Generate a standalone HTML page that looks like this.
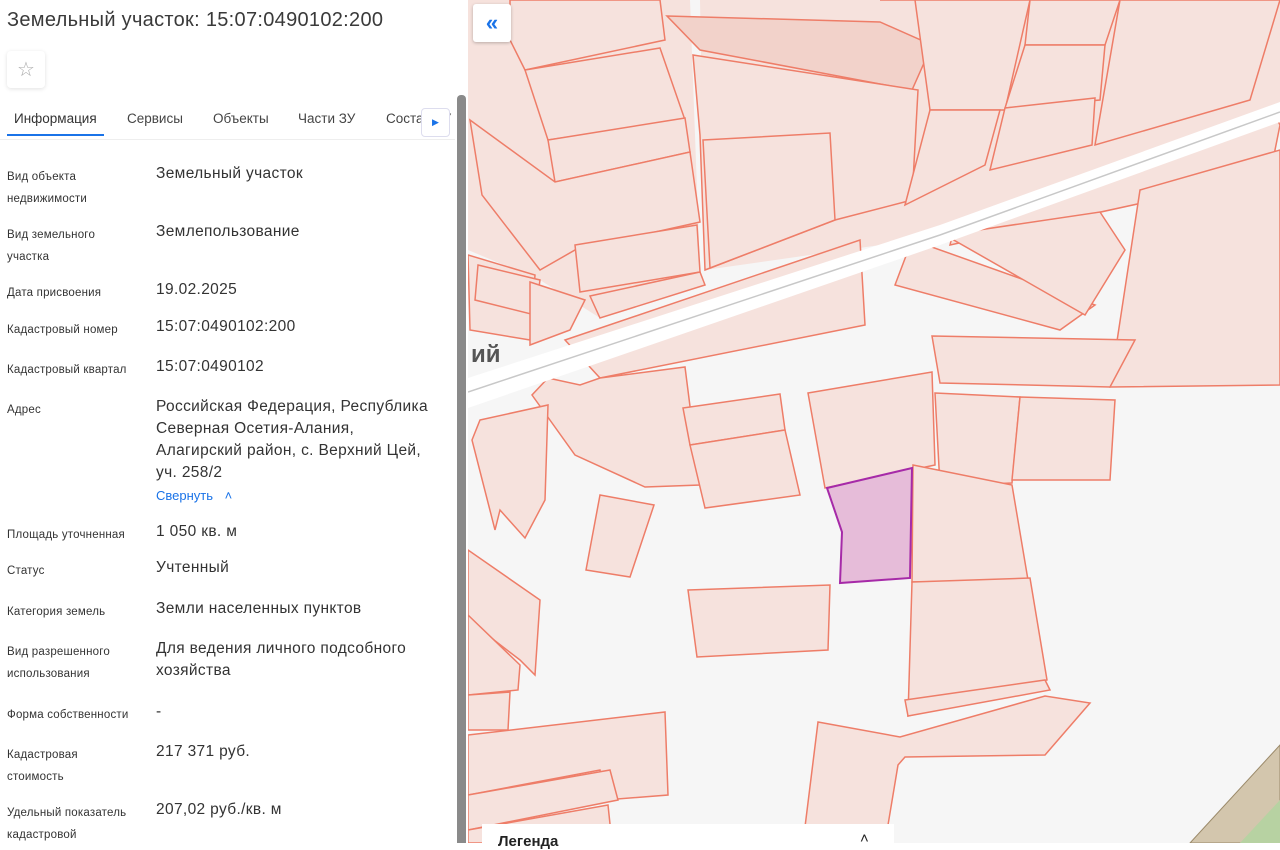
<!DOCTYPE html>
<html><head><meta charset="utf-8"><style>
*{margin:0;padding:0;box-sizing:border-box}
body{width:1280px;height:843px;overflow:hidden;background:#fff;font-family:"Liberation Sans",sans-serif;position:relative;color:#333}
.left{position:absolute;left:0;top:0;width:468px;height:843px;background:#fff}
h1{position:absolute;left:7px;top:9px;font-size:20px;letter-spacing:0.3px;font-weight:normal;color:#3a3a3a}
.star{position:absolute;left:7px;top:51px;width:38px;height:37px;border-radius:4px;box-shadow:0 1px 4px rgba(0,0,0,.12);display:flex;align-items:center;justify-content:center;color:#aaa;font-size:20px}
.tabs{position:absolute;left:0;top:110px;width:455px;height:30px;border-bottom:1px solid #eee;font-size:13.5px;color:#444;white-space:nowrap;overflow:hidden}
.tabs span{position:absolute;top:1px}
.tabs .act{border-bottom:2px solid #1a73e8;padding:0 7px 8px;left:7px;color:#333}
.tarr{position:absolute;left:421px;top:108px;width:29px;height:29px;border:1px solid #dde;border-radius:4px;background:#fff;color:#1a73e8;font-size:9px;display:flex;align-items:center;justify-content:center}
.sb{position:absolute;left:457px;top:95px;width:9px;height:748px;background:#8a8a8a;border-radius:4px 4px 0 0}
.row{position:absolute;left:7px;width:440px}
.lb{position:absolute;left:0;top:3px;font-size:11.5px;letter-spacing:0.2px;line-height:22px;color:#333;width:135px}
.vl{position:absolute;left:149px;top:0;font-size:15.5px;letter-spacing:0.35px;line-height:22px;color:#333;width:280px}
a{color:#1a73e8}
.map{position:absolute;left:468px;top:0;width:812px;height:843px;background:#f6f6f6;overflow:hidden}
.btn{position:absolute;left:473px;top:4px;width:38px;height:38px;background:#fff;border-radius:3px;box-shadow:0 1px 3px rgba(0,0,0,.25);color:#1a73e8;font-size:22px;font-weight:bold;display:flex;align-items:center;justify-content:center}
.leg{position:absolute;left:482px;top:824px;width:412px;height:25px;background:#fff;font-size:15px;font-weight:bold;padding:9px 0 0 16px;color:#222}
</style></head><body>
<div class="map">
<svg width="812" height="843" viewBox="468 0 812 843" style="position:absolute;left:0;top:0">
<g fill="#f6e2dd" stroke="none">
<polygon points="468,0 690,0 700,270 600,318 540,280 468,250"/>
<polygon points="700,0 1280,0 1280,110 950,235 705,270"/>
</g>
<g fill="#f6e2dd" stroke="#ee7d68" stroke-width="1.5">
<polygon points="510,0 660,0 665,40 525,70 510,40"/>
<polygon points="525,70 660,48 685,120 548,140"/>
<polygon points="548,140 685,118 690,152 555,182"/>
<polygon points="470,120 555,182 690,152 700,222 575,250 540,270 482,195"/>
<polygon points="575,245 697,225 700,272 580,292"/>
<polygon points="590,296 700,272 705,285 600,318"/>
<polygon points="667,16 880,22 932,45 912,90 700,50" fill="#f2d2ca"/>
<polygon points="693,55 918,90 912,200 835,220 705,270 700,135"/>
<polygon points="703,140 830,133 835,220 710,268"/>
<polygon points="880,0 1030,0 1005,110 930,110 915,0"/>
<polygon points="930,110 1000,110 985,165 905,205"/>
<polygon points="1030,0 1120,0 1105,45 1025,45"/>
<polygon points="1025,45 1105,45 1100,100 1005,108"/>
<polygon points="1120,0 1280,0 1250,100 1095,145"/>
<polygon points="1005,108 1095,98 1092,145 990,170"/>
<polygon points="955,225 1275,115 1280,125 1270,175 950,245"/>
<polygon points="912,240 1095,305 1060,330 895,285"/>
<polygon points="945,235 1100,212 1125,250 1085,315"/>
<polygon points="1140,190 1280,150 1280,385 1110,387"/>
<polygon points="565,340 860,240 865,325 600,378"/>
<polygon points="468,255 535,275 530,340 470,330"/>
<polygon points="478,265 540,280 535,315 475,300"/>
<polygon points="530,282 585,300 570,330 530,345"/>
<polygon points="548,378 580,385 600,378 685,367 700,485 645,487 575,455 532,395"/>
<polygon points="932,336 1135,340 1110,387 940,383"/>
<polygon points="808,393 932,372 935,465 825,488"/>
<polygon points="935,393 1020,397 1012,483 940,486"/>
<polygon points="1020,397 1115,400 1110,480 1012,480"/>
<polygon points="683,408 780,394 785,430 690,445"/>
<polygon points="690,445 785,430 800,495 705,508"/>
<polygon points="913,465 1012,485 1028,580 912,582"/>
<polygon points="912,582 1030,578 1047,680 908,716"/>
<polygon points="600,495 654,505 630,577 586,570"/>
<polygon points="688,590 830,585 828,650 697,657"/>
<polygon points="480,420 548,405 545,500 525,538 500,510 495,530 472,440"/>
<polygon points="468,550 540,600 535,675 520,660 468,620"/>
<polygon points="468,615 520,665 518,690 468,695"/>
<polygon points="468,695 510,692 508,730 468,730"/>
<polygon points="468,735 665,712 668,795 605,800 600,770 468,795"/>
<polygon points="468,795 610,770 618,800 468,830"/>
<polygon points="468,830 608,805 612,843 468,843"/>
<polygon points="818,722 900,737 1045,696 1090,703 1045,755 905,757 898,765 885,843 803,843"/>
<polygon points="905,700 1045,680 1050,690 908,716"/>
</g>
<polygon points="827,488 912,468 910,578 840,583 842,532" fill="#e6bcd9" stroke="#a62aa8" stroke-width="2"/>
<path d="M468,378 L940,225 L1280,102 L1280,122 L940,245 L468,408Z" fill="#fff"/>
<path d="M468,392 L940,235 L1280,112" fill="none" stroke="#c8c8c8" stroke-width="1.5"/>
<path d="M1190,843 L1280,745 L1280,843Z" fill="#d3c6ad" stroke="#9b8a6a"/>
<path d="M1240,843 L1280,800 L1280,843Z" fill="#b7d2a2"/>
<text x="471" y="362" font-family="Liberation Sans" font-size="24" font-weight="bold" fill="#555">ий</text>
</svg>
</div>
<div class="btn">«</div>
<div class="leg">Легенда<span style="position:absolute;left:378px;top:6px;font-weight:normal">˄</span></div>
<div class="left">
<h1>Земельный участок: 15:07:0490102:200</h1>
<div class="star">☆</div>
<div class="tabs"><span class="act">Информация</span><span style="left:127px">Сервисы</span><span style="left:213px">Объекты</span><span style="left:298px">Части ЗУ</span><span style="left:386px">Состав ЗУ</span></div>
<div class="tarr">▶</div>
<div class="row" style="top:163px"><div class="lb">Вид объекта<br>недвижимости</div><div class="vl">Земельный участок</div></div>
<div class="row" style="top:221px"><div class="lb">Вид земельного<br>участка</div><div class="vl">Землепользование</div></div>
<div class="row" style="top:279px"><div class="lb">Дата присвоения</div><div class="vl">19.02.2025</div></div>
<div class="row" style="top:316px"><div class="lb">Кадастровый номер</div><div class="vl">15:07:0490102:200</div></div>
<div class="row" style="top:356px"><div class="lb">Кадастровый квартал</div><div class="vl">15:07:0490102</div></div>
<div class="row" style="top:396px"><div class="lb">Адрес</div><div class="vl">Российская Федерация, Республика Северная Осетия-Алания, Алагирский район, с. Верхний Цей, уч. 258/2<div style="font-size:13px;margin-top:1px;letter-spacing:0"><a>Свернуть</a> <span style="color:#1a73e8;margin-left:8px">˄</span></div></div></div>
<div class="row" style="top:521px"><div class="lb">Площадь уточненная</div><div class="vl">1 050 кв. м</div></div>
<div class="row" style="top:557px"><div class="lb">Статус</div><div class="vl">Учтенный</div></div>
<div class="row" style="top:598px"><div class="lb">Категория земель</div><div class="vl">Земли населенных пунктов</div></div>
<div class="row" style="top:638px"><div class="lb">Вид разрешенного<br>использования</div><div class="vl">Для ведения личного подсобного хозяйства</div></div>
<div class="row" style="top:701px"><div class="lb">Форма собственности</div><div class="vl">-</div></div>
<div class="row" style="top:741px"><div class="lb">Кадастровая<br>стоимость</div><div class="vl">217 371 руб.</div></div>
<div class="row" style="top:799px"><div class="lb">Удельный показатель<br>кадастровой</div><div class="vl">207,02 руб./кв. м</div></div>
<div class="sb"></div>
</div>
</body></html>
